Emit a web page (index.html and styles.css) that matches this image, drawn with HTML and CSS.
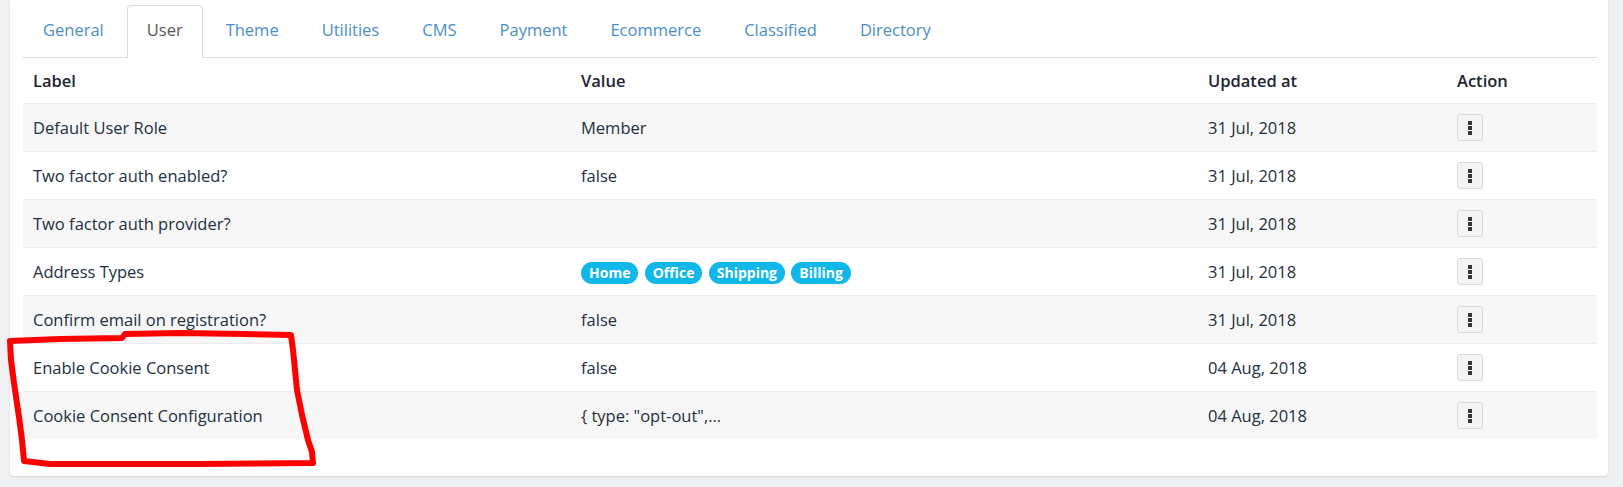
FILE: index.html
```html
<!DOCTYPE html>
<html>
<head>
  <meta charset="utf-8">
  <title>Settings</title>
  <link rel="stylesheet" href="styles.css">
</head>
<body>
  <div class="page">
    <div class="card">
      <ul class="tabs">
        <li><a href="#">General</a></li>
        <li class="active"><a href="#">User</a></li>
        <li><a href="#">Theme</a></li>
        <li><a href="#">Utilities</a></li>
        <li><a href="#">CMS</a></li>
        <li><a href="#">Payment</a></li>
        <li><a href="#">Ecommerce</a></li>
        <li><a href="#">Classified</a></li>
        <li><a href="#">Directory</a></li>
      </ul>

      <table class="settings">
        <colgroup>
          <col class="col-label">
          <col class="col-value">
          <col class="col-date">
          <col class="col-action">
        </colgroup>
        <thead>
          <tr>
            <th>Label</th>
            <th>Value</th>
            <th>Updated at</th>
            <th>Action</th>
          </tr>
        </thead>
        <tbody>
          <tr>
            <td>Default User Role</td>
            <td>Member</td>
            <td>31 Jul, 2018</td>
            <td><button class="kebab"><svg width="4" height="14" viewBox="0 0 4 14"><rect x="0" y="0" width="4" height="4"/><rect x="0" y="5" width="4" height="4"/><rect x="0" y="10" width="4" height="4"/></svg></button></td>
          </tr>
          <tr>
            <td>Two factor auth enabled?</td>
            <td>false</td>
            <td>31 Jul, 2018</td>
            <td><button class="kebab"><svg width="4" height="14" viewBox="0 0 4 14"><rect x="0" y="0" width="4" height="4"/><rect x="0" y="5" width="4" height="4"/><rect x="0" y="10" width="4" height="4"/></svg></button></td>
          </tr>
          <tr>
            <td>Two factor auth provider?</td>
            <td></td>
            <td>31 Jul, 2018</td>
            <td><button class="kebab"><svg width="4" height="14" viewBox="0 0 4 14"><rect x="0" y="0" width="4" height="4"/><rect x="0" y="5" width="4" height="4"/><rect x="0" y="10" width="4" height="4"/></svg></button></td>
          </tr>
          <tr>
            <td>Address Types</td>
            <td>
              <span class="badge">Home</span>
              <span class="badge">Office</span>
              <span class="badge">Shipping</span>
              <span class="badge">Billing</span>
            </td>
            <td>31 Jul, 2018</td>
            <td><button class="kebab"><svg width="4" height="14" viewBox="0 0 4 14"><rect x="0" y="0" width="4" height="4"/><rect x="0" y="5" width="4" height="4"/><rect x="0" y="10" width="4" height="4"/></svg></button></td>
          </tr>
          <tr>
            <td>Confirm email on registration?</td>
            <td>false</td>
            <td>31 Jul, 2018</td>
            <td><button class="kebab"><svg width="4" height="14" viewBox="0 0 4 14"><rect x="0" y="0" width="4" height="4"/><rect x="0" y="5" width="4" height="4"/><rect x="0" y="10" width="4" height="4"/></svg></button></td>
          </tr>
          <tr>
            <td>Enable Cookie Consent</td>
            <td>false</td>
            <td>04 Aug, 2018</td>
            <td><button class="kebab"><svg width="4" height="14" viewBox="0 0 4 14"><rect x="0" y="0" width="4" height="4"/><rect x="0" y="5" width="4" height="4"/><rect x="0" y="10" width="4" height="4"/></svg></button></td>
          </tr>
          <tr>
            <td>Cookie Consent Configuration</td>
            <td>{ type: "opt-out",...</td>
            <td>04 Aug, 2018</td>
            <td><button class="kebab"><svg width="4" height="14" viewBox="0 0 4 14"><rect x="0" y="0" width="4" height="4"/><rect x="0" y="5" width="4" height="4"/><rect x="0" y="10" width="4" height="4"/></svg></button></td>
          </tr>
        </tbody>
      </table>
    </div>

    <!-- hand drawn highlight -->
    <svg class="scribble" width="1623" height="487" viewBox="0 0 1623 487">
      <path d="M10 341 L60 339 L122 338 L125 334 L180 333 L245 334 L291 335 L293 350 L297 390 L302 415 L308 440 L312 452 L313 463 L200 464 L50 464 L24 461 L22 440 L19 417 L14 383 L11 360 Z"/>
    </svg>
  </div>
</body>
</html>
```

FILE: styles.css
```css
body {
  margin: 0;
  background-color: #eef0f2;
  font-family: "Open Sans", "Noto Sans", sans-serif;
  font-size: 16.5px;
  color: #22303f;
}
.page {
  position: relative;
  padding: 0 15px 10px 10px;
}
.card {
  background-color: #fff;
  padding: 5px 11px 37px 13px;
  border-radius: 0 0 4px 4px;
  box-shadow: 0 1px 2px rgba(0, 0, 0, 0.12);
}
.tabs {
  display: flex;
  margin: 0;
  padding: 0;
  list-style: none;
  border-bottom: 1px solid #dcdcdc;
}
.tabs li {
  margin-right: 3px;
  margin-bottom: -1px;
}
.tabs a {
  display: block;
  height: 51px;
  line-height: 48px;
  padding: 0 19px;
  border: 1px solid transparent;
  border-bottom: 0;
  border-radius: 4px 4px 0 0;
  color: #4b8ec8;
  text-decoration: none;
}
.tabs .active a {
  color: #5b5550;
  background-color: #fff;
  border-color: #dcdcdc;
  height: 52px;
}
.settings {
  width: 100%;
  table-layout: fixed;
  border-collapse: collapse;
}
.col-label { width: 548px; }
.col-value { width: 627px; }
.col-date { width: 249px; }
.col-action { width: 150px; }
.settings th {
  height: 45px;
  padding: 0 10px;
  text-align: left;
  font-weight: 600;
  color: #1c2533;
}
.settings td {
  height: 47px;
  padding: 0 10px;
  border-top: 1px solid #ececec;
  white-space: nowrap;
}
.settings tbody tr:nth-child(odd) td {
  background-color: #f7f7f7;
}
.badge {
  display: inline-block;
  height: 22px;
  line-height: 22px;
  padding: 0 8px;
  margin-right: 2px;
  border-radius: 11px;
  background-color: #10b7e8;
  color: #fff;
  font-size: 14px;
  font-weight: 700;
  vertical-align: middle;
}
.kebab {
  display: flex;
  align-items: center;
  justify-content: center;
  width: 26px;
  height: 27px;
  padding: 0;
  background-color: #f4f4f4;
  border: 1px solid #dadada;
  border-radius: 3px;
}
.kebab svg {
  fill: #3a3434;
}
.scribble {
  position: absolute;
  top: 0;
  left: 0;
  pointer-events: none;
}
.scribble path {
  fill: none;
  stroke: #ff0000;
  stroke-width: 6;
  stroke-linejoin: round;
}
```
